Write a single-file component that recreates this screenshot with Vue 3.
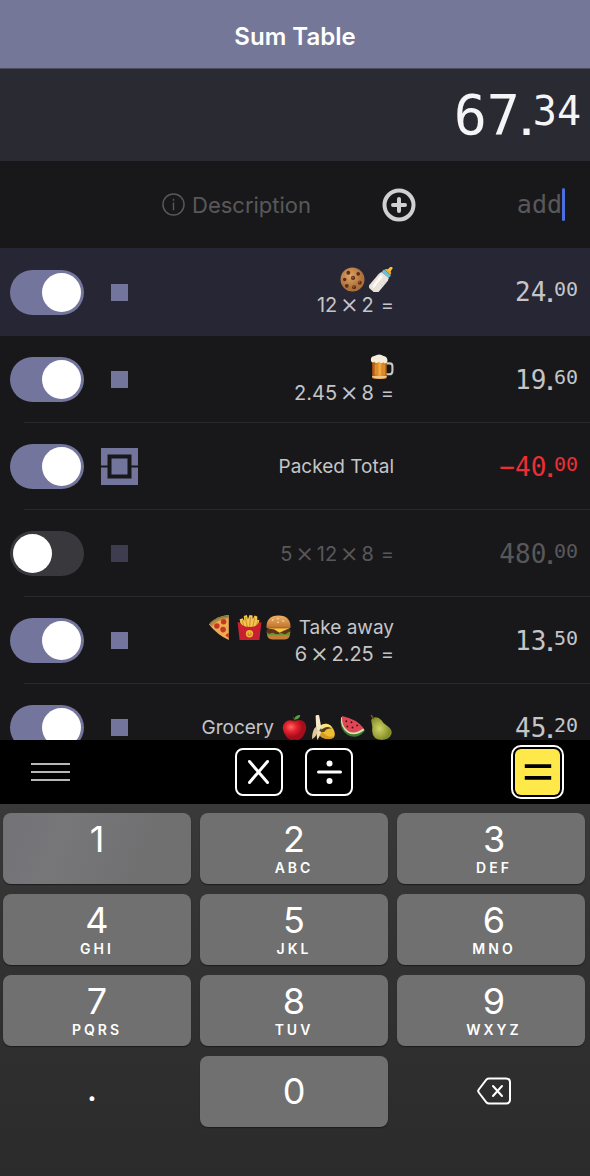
<template>
  <div class="app">
    <svg class="sprites" aria-hidden="true">
      <defs>
        <radialGradient id="g-cookie" cx="40%" cy="35%"><stop offset="0" stop-color="#dda566" /><stop offset="1" stop-color="#b0703a" /></radialGradient>
        <linearGradient id="g-beer" x1="0" x2="1"><stop offset="0" stop-color="#a4500e" /><stop offset=".5" stop-color="#f2a535" /><stop offset="1" stop-color="#b5600f" /></linearGradient>
        <radialGradient id="g-apple" cx="35%" cy="35%"><stop offset="0" stop-color="#ff6a64" /><stop offset=".5" stop-color="#e2222e" /><stop offset="1" stop-color="#a80d1c" /></radialGradient>
        <radialGradient id="g-pear" cx="40%" cy="50%"><stop offset="0" stop-color="#d0d468" /><stop offset="1" stop-color="#87912a" /></radialGradient>
        <linearGradient id="g-bun" x1="0" x2="0" y1="0" y2="1"><stop offset="0" stop-color="#eeb164" /><stop offset="1" stop-color="#bd6e2d" /></linearGradient>
      </defs>
      <symbol id="cookie" viewBox="0 0 24 24">
        <circle cx="12" cy="12" r="11.5" fill="url(#g-cookie)" />
        <g fill="#5b2f19">
          <circle cx="8" cy="5.500" r="1.900" /><circle cx="17.500" cy="6.500" r="1.800" /><circle cx="12.500" cy="10.500" r="2" />
          <circle cx="4.500" cy="12" r="1.700" /><circle cx="19" cy="15" r="1.900" /><circle cx="6.500" cy="18" r="1.800" /><circle cx="13.500" cy="19.500" r="1.900" />
        </g>
        <g fill="#96613a"><circle cx="12" cy="10" r="1" /><circle cx="18.500" cy="14.500" r=".8" /><circle cx="13" cy="19" r=".8" /></g>
      </symbol>
      <symbol id="bottle" viewBox="0 0 24 24">
        <g transform="rotate(40 12 12)">
          <path d="M10.800 -3q1.200-1.500 2.400 0l.6 4h-3.600z" fill="#f5c344" />
          <path d="M8.200 3q0-2.500 3.800-2.500t3.800 2.500z" fill="#f0b429" />
          <rect x="7.500" y="3" width="9" height="3.500" rx="1" fill="#69bfe0" />
          <path d="M7.500 6.500h9l1 2.500v14q0 3-3 3h-5q-3 0-3-3V9z" fill="#e9e3dc" />
          <path d="M8.500 9h3v14h-2z" fill="#fffaf4" />
          <path d="M14.500 12h3m-3 4h3" stroke="#cfc6bf" stroke-width=".6" />
        </g>
      </symbol>
      <symbol id="beer" viewBox="0 0 24 24">
        <path d="M16 9h4q2.500 0 2.500 3v4q0 3.500-3 3.500H16" fill="none" stroke="#c7c9c4" stroke-width="2" />
        <path d="M3 5h14v17q0 2-2 2H5q-2 0-2-2z" fill="url(#g-beer)" />
        <path d="M6.500 10v10m4-11v11m4-10v10" stroke="#ffd572" stroke-width="1" opacity=".4" />
        <path d="M3 21h14v1.500q-7 2-14 0z" fill="#e4c79a" />
        <path d="M2 7Q1 2.500 5 2q5-3 9 0 4.500 1 3.500 6-2.500 2-4 0-2 2-4-.5Q7 10 5 7.500 3.500 9 2 7z" fill="#f5eddc" />
      </symbol>
      <symbol id="pizza" viewBox="0 0 24 24">
        <path d="M1 9Q8 1 20 0v24Q9 19 1 9z" fill="#edac54" />
        <path d="M1 9Q8 1 20 0v3Q9 4 3.500 11z" fill="#b9854a" />
        <path d="M2 8Q9 1.500 20 1" fill="none" stroke="#6f8135" stroke-width="1" />
        <g fill="#c83724"><circle cx="15" cy="6.500" r="2.600" /><circle cx="8.500" cy="10.500" r="2.600" /><circle cx="14.500" cy="14" r="2.700" /><path d="M20 17.500q-3 0-3 2.500l3 2z" /></g>
      </symbol>
      <symbol id="fries" viewBox="0 0 24 24">
        <path d="M4 12 2.500 4l3-1L7 6 6.500 1l3-1 1 4L12 0l3 .5V4L17 .5l2.500 1V5l2-.5L20 12z" fill="#f5c64f" />
        <path d="m5 5 2 7m1-10 2 10m3-10-1 10m5-9-2 9m5-6-2 6" stroke="#c58a24" stroke-width=".9" />
        <path d="M.5 7q2-.5 3 1 2 3.500 8.500 3.500T20.500 8q1-1.500 3-1L21.500 24h-19z" fill="#c92031" />
        <circle cx="12" cy="18" r="3.500" fill="#efb534" />
        <path d="M10.800 17v.8m2.400-.8v.8m-3 .8q1.800 2 3.600 0" fill="none" stroke="#b54722" stroke-width=".8" />
      </symbol>
      <symbol id="burger" viewBox="0 0 24 24">
        <path d="M1 18h22q0 5.500-5 5.500H6q-5 0-5-5.500z" fill="#c77c37" />
        <rect x=".5" y="13" width="23" height="5.500" rx="2.500" fill="#60301c" />
        <path d="M.5 16q2 3 4 1.500 2-1 4 .5t4 0 4 0 3 0 4-2l-1 3.500H1.500z" fill="#5e9a2e" />
        <path d="M1 12.500h22L17 15l-4 2-5-3z" fill="#f8c83b" />
        <path d="M.5 12.500Q0 .5 12 .5t11.500 12q-11.500 1-23 0z" fill="url(#g-bun)" />
        <path d="M1 12h22" stroke="#e54d2c" stroke-width="1" />
        <path d="m6 5 1-.5m4-1h1m4 2 1 .5m-6 1h1" stroke="#ffe2a5" stroke-width="1" stroke-linecap="round" />
      </symbol>
      <symbol id="apple" viewBox="0 0 24 24">
        <path d="M12 6Q6 3.500 3 7-1 11 2 17q3 7 7.500 7 2.500-1 5 0 4.500 0 7.500-7 3-6.500-1-10.500Q18 3.500 12 6z" fill="url(#g-apple)" />
        <path d="M12 7q.5-3-1-5" fill="none" stroke="#694019" stroke-width="1.200" />
        <path d="M12 4.500Q12 0 17.500 0q0 4-5.500 4.500z" fill="#4ba53b" />
      </symbol>
      <symbol id="banana" viewBox="0 0 24 24">
        <path d="M9 10q7-4 11.500 2 3.500 5 2 8.500-1 2.500-6 2.500-6 0-10-6z" fill="#eebd31" />
        <path d="M10 15q5 7 12 5.500-1 3-6 2.500-7-.5-10-6z" fill="#d69a20" />
        <path d="M5 13 4.500 2Q4 0 6 0q2-.5 2 1.500L10 13l-2 5z" fill="#f6e9c8" />
        <path d="M5 11q-4 3-4 12 4-2 5.500-7z" fill="#dfc899" />
        <path d="M6 14q-1 5 0 10 4-5 4-11z" fill="#efdcae" />
        <path d="M10 12q6-2 10 1-5-.5-7 3-3 1-5-1z" fill="#18181a" opacity=".75" />
        <path d="M9 10q7-4 11 2-5-2-10 2z" fill="#ffe27d" />
      </symbol>
      <symbol id="melon" viewBox="0 0 24 24">
        <path d="M1 3q-2 10 6 16 9 5 16.500-3.500L23 13z" fill="#397b38" />
        <path d="M1 2q-1 10 6.500 15Q15 21 23.500 14.500L22 13z" fill="#dbe5a7" />
        <path d="M2 1Q1 11 8 15.500q7 3.500 14.500-3Q16 4 2 1z" fill="#e04654" />
        <g fill="#39171c"><circle cx="6" cy="6" r=".9" /><circle cx="11" cy="7" r=".9" /><circle cx="7" cy="11" r=".9" /><circle cx="12" cy="12" r=".9" /><circle cx="16.500" cy="10" r=".9" /></g>
      </symbol>
      <symbol id="pear" viewBox="0 0 24 24">
        <path d="M3.500 3Q8 .5 12 5q1.500 3 5 5 6 4 4.500 8.500Q19 24 12 24 3.500 23.500 3 15q.5-4-.5-7.500Q1.500 4 3.500 3z" fill="url(#g-pear)" />
        <path d="M4.500 4 2 0" stroke="#79542b" stroke-width="1.400" />
      </symbol>
    </svg>

    <header class="title-bar">
      <h1>Sum Table</h1>
    </header>

    <div class="total">
      <output class="amount amount-total">67<b>.</b><span class="cents">34</span></output>
    </div>

    <form class="entry" @submit.prevent>
      <label class="description">
        <svg class="info" viewBox="0 0 24 24" role="img" aria-label="Description">
          <circle cx="12" cy="12" r="11" />
          <path d="M12 10v8m0-12v2" />
        </svg>
        <input v-model="description" type="text" placeholder="Description" />
      </label>
      <button class="add" type="submit" aria-label="Add">
        <svg viewBox="0 0 34 34">
          <circle cx="17" cy="17" r="14.500" />
          <path d="M17 11v12M11 17h12" />
        </svg>
      </button>
      <div class="entry-amount">
        <input v-model="amount" type="text" placeholder="add" aria-label="Amount" />
        <span class="caret"></span>
      </div>
    </form>

    <ul class="rows">
      <li v-for="row in rows" :key="row.id" class="row" :class="{ 'is-selected': row.selected, 'is-off': !row.on }">
        <input v-model="row.on" class="switch" type="checkbox" role="switch" :aria-label="row.label || 'Row ' + row.id" />
        <svg v-if="row.packed" class="packed" viewBox="0 0 37 37">
          <path class="packed-fill" d="M0 0h37v37H0z" />
          <path class="packed-line" d="M0 18.500h8M29 18.500h8" />
          <path class="packed-box" d="M8.500 8.500h20v20h-20z" />
        </svg>
        <span v-else class="marker"></span>
        <div class="details">
          <div v-if="row.label || row.emoji" class="line">
            <span v-if="row.label && !row.emojiFirst">{{ row.label }}</span>
            <svg v-for="name in row.emoji" :key="name" class="emoji">
              <use :href="'#' + name" />
            </svg>
            <span v-if="row.label && row.emojiFirst">{{ row.label }}</span>
          </div>
          <div v-if="row.formula" class="line formula">
            <template v-for="(part, i) in row.formula" :key="i">
              <span v-if="i > 0" class="times">×</span>
              <span>{{ part }}</span>
            </template>
            <span class="result">=</span>
          </div>
        </div>
        <span class="amount" :class="{ 'is-negative': row.negative }">{{ row.whole }}<b>.</b><span class="cents">{{ row.cents }}</span></span>
      </li>
    </ul>

    <div class="toolbar">
      <button class="menu" aria-label="Menu">
        <svg viewBox="0 0 40 20"><path d="M1 2h39M1 10h39M1 18h39" /></svg>
      </button>
      <div class="operators">
        <button class="operator" aria-label="Multiply">
          <svg viewBox="0 0 48 48"><path d="m14.500 13.500 18 21M32.500 13.500l-18 21" /></svg>
        </button>
        <button class="operator" aria-label="Divide">
          <svg viewBox="0 0 48 48"><path d="M13.500 24h22" /><circle cx="24.500" cy="15.500" r="3" /><circle cx="24.500" cy="33" r="3" /></svg>
        </button>
      </div>
      <button class="equals" aria-label="Equals">
        <svg viewBox="0 0 46 46"><path d="M10 17h27M10 29h27" /></svg>
      </button>
    </div>

    <div class="keypad">
      <button v-for="key in keys" :key="key.digit" class="key">
        <span class="digit">{{ key.digit }}</span>
        <span class="letters">{{ key.letters }}</span>
      </button>
      <button class="key is-plain is-point"><span class="digit">.</span></button>
      <button class="key is-zero"><span class="digit">0</span></button>
      <button class="key is-plain" aria-label="Delete">
        <svg class="delete" viewBox="0 0 34 28">
          <path d="M12 1.500h17q4 0 4 4v17q0 4-4 4H12q-1.500 0-2.500-1L1.800 15.500q-1.200-1.500 0-3L9.500 2.500q1-1 2.500-1z" />
          <path d="m16 9 9 10m0-10-9 10" />
        </svg>
      </button>
    </div>
  </div>
</template>

<script setup>
import { ref } from 'vue'

const description = ref('')
const amount = ref('')

const rows = ref([
  { id: 1, on: true, selected: true, emoji: ['cookie', 'bottle'], formula: ['12', '2'], whole: '24', cents: '00' },
  { id: 2, on: true, emoji: ['beer'], formula: ['2.45', '8'], whole: '19', cents: '60' },
  { id: 3, on: true, packed: true, label: 'Packed Total', whole: '−40', cents: '00', negative: true },
  { id: 4, on: false, formula: ['5', '12', '8'], whole: '480', cents: '00' },
  { id: 5, on: true, emoji: ['pizza', 'fries', 'burger'], emojiFirst: true, label: 'Take away', formula: ['6', '2.25'], whole: '13', cents: '50' },
  { id: 6, on: true, label: 'Grocery', emoji: ['apple', 'banana', 'melon', 'pear'], whole: '45', cents: '20' }
])

const keys = [
  { digit: '1', letters: '' },
  { digit: '2', letters: 'ABC' },
  { digit: '3', letters: 'DEF' },
  { digit: '4', letters: 'GHI' },
  { digit: '5', letters: 'JKL' },
  { digit: '6', letters: 'MNO' },
  { digit: '7', letters: 'PQRS' },
  { digit: '8', letters: 'TUV' },
  { digit: '9', letters: 'WXYZ' }
]
</script>

<style>
body {
  background: #18181a;
}
</style>

<style scoped>
.app {
  display: flex;
  flex-direction: column;
  height: 100vh;
  background: #18181a;
  color: #c5c5c7;
  font-family: Inter, "Liberation Sans", sans-serif;
}

button,
input {
  margin: 0;
  padding: 0;
  border: 0;
  background: none;
  color: inherit;
  font: inherit;
  outline: none;
}

button {
  cursor: pointer;
}

svg {
  display: block;
  fill: none;
}

.sprites {
  position: absolute;
  width: 0;
  height: 0;
}

.title-bar {
  display: flex;
  flex: none;
  align-items: center;
  justify-content: center;
  height: 68px;
  padding-top: 4px;
  box-sizing: border-box;
  background: #757799;
}

h1 {
  margin: 0;
  color: #fff;
  font-size: 24px;
  font-weight: 600;
}

.amount {
  display: flex;
  justify-content: flex-end;
  height: 32px;
  font-family: "DejaVu Sans Mono", monospace;
  font-size: 26px;
  line-height: 32px;
}

.amount b {
  font-family: "DejaVu Sans", sans-serif;
  font-size: 20px;
  line-height: 38px;
}

.cents {
  font-size: 20px;
  line-height: 26px;
}

.total {
  flex: none;
  height: 93px;
  padding: 12px 9px 0 0;
  box-sizing: border-box;
  background: #2a2a33;
  border-top: 1px solid #4a4b60;
}

.amount-total {
  height: 68px;
  color: #f5f5f7;
  font-size: 55px;
  line-height: 68px;
}

.amount-total b {
  font-size: 34px;
  line-height: 84px;
}

.amount-total .cents {
  font-size: 40px;
  line-height: 60px;
}

.entry {
  display: flex;
  flex: none;
  align-items: center;
  height: 87px;
  padding-right: 25px;
  box-sizing: border-box;
}

.description {
  display: flex;
  flex: 1;
  align-items: center;
  justify-content: flex-end;
  gap: 7px;
  min-width: 0;
}

.description input {
  width: 190px;
  font-size: 22px;
}

.entry input::placeholder {
  color: #58585a;
  opacity: 1;
}

.info {
  width: 23px;
  height: 23px;
  stroke: #58585a;
  stroke-width: 1.5;
}

.add svg {
  width: 34px;
  height: 34px;
  stroke: #d0d0d2;
  stroke-width: 4;
  stroke-linecap: round;
}

.entry-amount {
  display: flex;
  align-items: center;
  justify-content: flex-end;
  width: 149px;
}

.entry-amount input {
  width: 120px;
  font-family: "DejaVu Sans Mono", monospace;
  font-size: 25px;
  text-align: right;
}

.caret {
  width: 3px;
  height: 33px;
  border-radius: 2px;
  background: #4a6fe0;
}

.rows {
  flex: 1;
  min-height: 0;
  margin: 0;
  padding: 0;
  overflow: hidden;
  list-style: none;
}

.row {
  display: grid;
  grid-template-columns: 74px 70px 1fr 184px;
  align-items: center;
  height: 87px;
  padding: 0 12px 0 10px;
  background: linear-gradient(#29292b, #29292b) 24px 100% / 100% 1px no-repeat;
}

.row.is-selected {
  height: 88px;
  background: #272634;
}

.switch {
  width: 74px;
  height: 45px;
  padding: 3px;
  box-sizing: border-box;
  border-radius: 23px;
  background: #39393d;
  appearance: none;
}

.switch::before {
  content: "";
  display: block;
  width: 39px;
  height: 39px;
  border-radius: 50%;
  background: #fff;
}

.switch:checked {
  background: #73759d;
}

.switch:checked::before {
  margin-left: 29px;
}

.marker {
  width: 17px;
  height: 17px;
  justify-self: center;
  background: #73759d;
}

.packed {
  width: 37px;
  height: 37px;
  justify-self: center;
}

.packed-fill {
  fill: #73759d;
}

.packed-line {
  stroke: #18181a;
  stroke-width: 2;
}

.packed-box {
  stroke: #18181a;
  stroke-width: 4;
}

.line {
  display: flex;
  align-items: center;
  justify-content: flex-end;
  gap: 4px;
  height: 26px;
  font-size: 19px;
  line-height: 26px;
  white-space: nowrap;
}

.line span + .emoji,
.emoji + span {
  margin-left: 4px;
}

.emoji {
  width: 25px;
  height: 25px;
}

.formula {
  gap: 3px;
  font-size: 20px;
}

.times {
  padding-bottom: 4px;
  font-size: 28px;
  font-weight: 300;
}

.result {
  margin-left: 4px;
}

.is-off .details,
.is-off .amount {
  color: #58585a;
}

.is-off .marker {
  background: #3e3d50;
}

.amount.is-negative {
  color: #ec2f35;
}

.toolbar {
  display: grid;
  grid-template-columns: 1fr auto 1fr;
  flex: none;
  align-items: center;
  height: 64px;
  padding: 0 26px 0 24px;
  background: #000;
}

.menu {
  justify-self: start;
  padding: 8px 6px;
}

.menu svg {
  width: 40px;
  height: 20px;
  stroke: #b8b8ba;
  stroke-width: 2;
}

.operators {
  display: flex;
  gap: 22px;
}

.operator {
  width: 48px;
  height: 48px;
  border: 2px solid #fff;
  border-radius: 8px;
}

.operator svg {
  width: 48px;
  height: 48px;
  margin: -2px;
  fill: #fff;
  stroke: #fff;
  stroke-width: 3;
  stroke-linecap: round;
}

.operator circle {
  stroke: none;
}

.equals {
  justify-self: end;
  padding: 2px;
  border: 2px solid #fff;
  border-radius: 10px;
}

.equals svg {
  width: 45px;
  height: 46px;
  border-radius: 6px;
  background: #ffe84a;
  stroke: #000;
  stroke-width: 4;
}

.keypad {
  display: grid;
  grid-template-columns: repeat(3, 1fr);
  grid-auto-rows: 71px;
  flex: none;
  gap: 10px 9px;
  height: 372px;
  padding: 9px 5px 0 3px;
  box-sizing: border-box;
  background: linear-gradient(#39393a, #323233 40%, #2b2b2c);
}

.key {
  display: flex;
  flex-direction: column;
  align-items: center;
  padding-top: 5px;
  border-radius: 8px;
  background: #707071;
  box-shadow: 0 1px 1px #1c1c1d;
  color: #fff;
}

.key:first-child {
  background: linear-gradient(110deg, #727277, #77777a 30%, #707071 75%);
}

.key:nth-child(3n) {
  padding-left: 6px;
}

.digit {
  font-size: 36px;
  line-height: 42px;
}

.letters {
  font-size: 14px;
  font-weight: 600;
  line-height: 16px;
  letter-spacing: 3px;
}

.is-zero,
.is-plain {
  justify-content: center;
  padding: 0 0 2px;
}

.is-plain {
  background: none;
  box-shadow: none;
}

.is-point {
  padding: 0 10px 8px 0;
}

.delete {
  width: 34px;
  height: 28px;
  stroke: #fff;
  stroke-width: 2;
  stroke-linecap: round;
}
</style>
